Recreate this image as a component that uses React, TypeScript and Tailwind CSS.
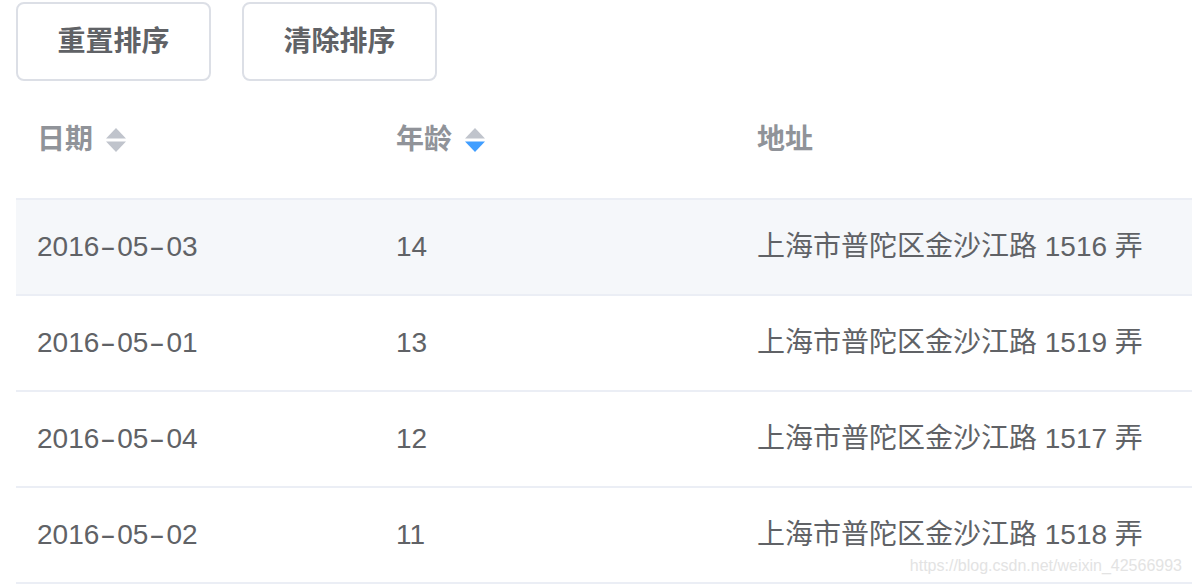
import React from "react";

const rows = [
  { date: "2016-05-03", age: "14", addr: "上海市普陀区金沙江路 1516 弄", hover: true },
  { date: "2016-05-01", age: "13", addr: "上海市普陀区金沙江路 1519 弄" },
  { date: "2016-05-04", age: "12", addr: "上海市普陀区金沙江路 1517 弄" },
  { date: "2016-05-02", age: "11", addr: "上海市普陀区金沙江路 1518 弄" },
];

const font = "font-['Helvetica','Liberation_Sans','Noto_Sans_CJK_SC',sans-serif]";

// sort caret, dir picks the highlighted half
const SortCaret = ({ dir }: { dir?: "asc" | "desc" }) => (
  <svg width="20" height="24" viewBox="0 0 20 24" className="ml-[13px]">
    <polygon points="10,0 20,10.5 0,10.5" fill={dir === "asc" ? "#409eff" : "#c0c4cc"} />
    <polygon points="0,13.5 20,13.5 10,24" fill={dir === "desc" ? "#409eff" : "#c0c4cc"} />
  </svg>
);

// wider dashes like the original system font
const DateText = ({ value }: { value: string }) => {
  const parts = value.split("-");
  return (
    <>
      {parts.map((p, i) => (
        <React.Fragment key={i}>
          {i > 0 && <span className="inline-block w-[18px] text-center scale-x-[1.7]">-</span>}
          {p}
        </React.Fragment>
      ))}
    </>
  );
};

const App = () => {
  return (
    <div className={`relative w-[1192px] h-[584px] overflow-hidden bg-white ${font}`}>
      <div className="flex gap-[31px] pl-[16px] pt-[2px]">
        <button className="w-[195px] h-[79px] rounded-[8px] border-2 border-[#dcdfe6] bg-white text-[28px] font-bold text-[#606266]">
          重置排序
        </button>
        <button className="w-[195px] h-[79px] rounded-[8px] border-2 border-[#dcdfe6] bg-white text-[28px] font-bold text-[#606266]">
          清除排序
        </button>
      </div>
      <div className="ml-[16px] w-[1220px]">
        <div className="grid grid-cols-[359px_361px_1fr] h-[119px] pt-[1px] items-center border-b-2 border-[#ebeef5] text-[28px] font-bold text-[#909399]">
          <div className="flex items-center pl-[21px]">
            <span>日期</span>
            <SortCaret />
          </div>
          <div className="flex items-center pl-[21px]">
            <span>年龄</span>
            <SortCaret dir="desc" />
          </div>
          <div className="pl-[21px]">地址</div>
        </div>
        {rows.map((r) => (
          <div
            key={r.date}
            className={`grid grid-cols-[359px_361px_1fr] h-[96px] items-center border-b-2 border-[#ebeef5] text-[28px] text-[#606266] ${
              r.hover ? "bg-[#f5f7fa]" : "bg-white"
            }`}
          >
            <div className="pl-[21px]">
              <DateText value={r.date} />
            </div>
            <div className="pl-[21px]">{r.age}</div>
            <div className="pl-[21px]">{r.addr}</div>
          </div>
        ))}
      </div>
      <div className="absolute right-[10px] top-[554px] text-[16px] text-[#e3e3e3] font-['Liberation_Sans',sans-serif]">
        https://blog.csdn.net/weixin_42566993
      </div>
    </div>
  );
};

export default App;
